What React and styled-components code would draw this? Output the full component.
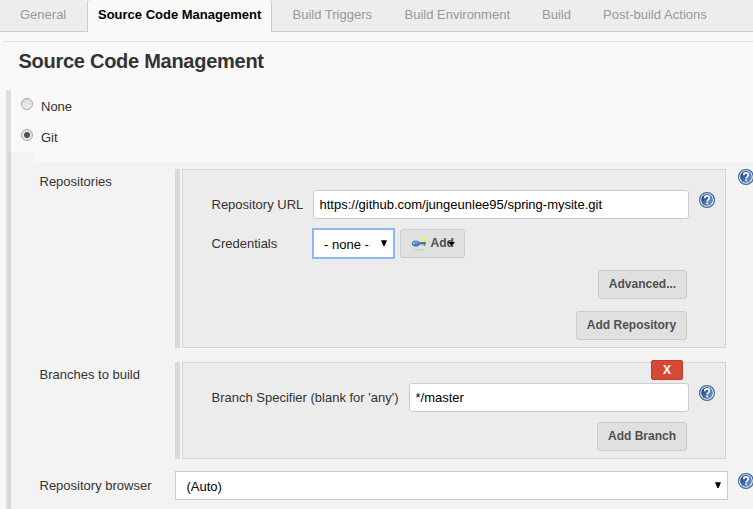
import React from "react";
import styled, { createGlobalStyle, css } from "styled-components";

const GlobalStyle = createGlobalStyle`
  *, *::before, *::after { box-sizing: border-box; }
  body { margin: 0; background: #f9f9f9; overflow: hidden; }
  button, input { font-family: inherit; }
`;

const Page = styled.main`
  width: 753px;
  height: 509px;
  overflow: hidden;
  display: flex;
  flex-direction: column;
  background: #f9f9f9;
  color: #333;
  font: 13px/16px "Liberation Sans", Arial, sans-serif;
`;

const TabBar = styled.nav`
  display: flex;
  flex: none;
  height: 32px;
  background: #ededed;
  border-bottom: 1px solid #ccc;
`;

const Tab = styled.a`
  flex: none;
  width: ${(p) => p.$width}px;
  height: 32px;
  padding: 7px 0 0 ${(p) => p.$indent}px;
  white-space: nowrap;
  color: #999;
  letter-spacing: ${(p) => p.$spacing || 0}px;
  ${(p) =>
    p.$active &&
    css`
      color: #000;
      font-weight: bold;
      background: #f9f9f9;
      border: 1px solid #ccc;
      border-width: 0 1px;
      border-radius: 3px 3px 0 0;
    `}
`;

const Title = styled.h1`
  flex: none;
  height: 49px;
  margin: 9px 0 0 3px;
  padding: 7px 0 0 15.5px;
  border-top: 1px solid #ddd;
  font-size: 20px;
  line-height: 24px;
  letter-spacing: -0.27px;
`;

const Section = styled.section`
  flex: 1;
  margin-left: 6px;
  border-left: 5px solid #dedede;
`;

const RadioRow = styled.label`
  display: flex;
  align-items: flex-start;
  gap: 8px;
  height: 31px;
  padding: 8px 0 0 10px;
`;

const RadioDot = styled.span`
  flex: none;
  width: 12px;
  height: 12px;
  border: 1px solid #a5a5a5;
  border-radius: 50%;
  background: ${(p) =>
    p.$checked
      ? "radial-gradient(circle, #555 0 2.6px, #e6e6e6 3.4px)"
      : "linear-gradient(#dcdcdc, #eee)"};
`;

const RadioText = styled.span`
  padding-top: 1px;
`;

const PanelLip = styled.div`
  width: 26px;
  height: 10px;
  margin-left: -3px;
  background: #f3f3f3;
  border-left: 3px solid #d9d9d9;
`;

const Panel = styled.div`
  height: 347px;
  margin-left: -3px;
  padding: 7px 0 0 29px;
  border-left: 3px solid #d9d9d9;
  background: #f3f3f3;
  display: flex;
  flex-direction: column;
`;

const Row = styled.div`
  flex: none;
  display: flex;
  align-items: flex-start;
  height: ${(p) => p.$height}px;
  margin-bottom: ${(p) => p.$gap || 0}px;
`;

const RowLabel = styled.div`
  flex: none;
  width: 135px;
  padding-top: ${(p) => p.$top}px;
  text-indent: -0.5px;
`;

const Chunk = styled.div`
  flex: none;
  width: 551px;
  height: 100%;
  margin-right: 2px;
  padding-left: 2px;
  border-left: 5px solid #d9d9d9;
`;

const Card = styled.div`
  position: relative;
  height: 100%;
  border: 1px solid #d4d4d4;
  background: #ececec;
  padding: 20px 10px 0 28px;
`;

const Field = styled.div`
  display: flex;
  align-items: flex-start;
  height: ${(p) => p.$height}px;
`;

const FieldLabel = styled.label`
  flex: none;
  width: ${(p) => p.$width}px;
  padding-top: 7px;
  text-indent: 0.5px;
  white-space: nowrap;
`;

const TextInput = styled.input`
  flex: none;
  width: ${(p) => p.$width}px;
  height: 29px;
  padding: 0 5.5px;
  border: 1px solid #ccc;
  border-radius: 3px;
  background: #fff;
  color: #000;
  font-size: 13px;
`;

const SelectBox = styled.div`
  flex: none;
  display: flex;
  justify-content: space-between;
  width: ${(p) => p.$width}px;
  height: ${(p) => (p.$focused ? 31 : 29)}px;
  margin: ${(p) => (p.$focused ? "-1px 5px 0 -1px" : 0)};
  padding: ${(p) => (p.$focused ? "7px 6px 0 10px" : "7px 6px 0 10.5px")};
  border: ${(p) => (p.$focused ? "2px solid #8fb5f5" : "1px solid #ccc")};
  background: #fff;
  color: #000;
`;

const Caret = styled.svg`
  flex: none;
  width: 6px;
  height: 6px;
  margin-top: ${(p) => p.$top}px;
`;

const Button = styled.button`
  flex: none;
  width: ${(p) => p.$width}px;
  height: 29px;
  padding: 0 0 2px;
  border: 1px solid #ccc;
  border-radius: 3px;
  background: #e0e0e0;
  color: #505050;
  font-size: 12px;
  font-weight: bold;
  white-space: nowrap;
`;

const AddButton = styled(Button)`
  display: flex;
  align-items: center;
  padding: 0 0 2px 10px;
`;

const KeyIcon = styled.svg`
  flex: none;
  width: 17px;
  height: 16px;
  margin: 2px 2.5px 0 0;
`;

const MenuArrow = styled.svg`
  flex: none;
  width: 7px;
  height: 4px;
  margin: 2px 0 0 -5.5px;
`;

const ButtonRow = styled.div`
  display: flex;
  justify-content: flex-end;
  height: ${(p) => p.$height}px;
  padding-right: 28px;
`;

const DeleteButton = styled.button`
  position: absolute;
  top: -3px;
  right: 42px;
  width: 32px;
  height: 20px;
  padding: 0;
  border: 1px solid #c23b2e;
  border-radius: 2px;
  background: #d64937;
  color: #fff;
  font-size: 12px;
  line-height: 17px;
  font-weight: bold;
`;

const HelpSvg = styled.svg`
  flex: none;
  width: 16px;
  height: 16px;
  margin: ${(p) => p.$top}px 0 0 10px;
`;

const Help = ({ top = 0 }) => (
  <HelpSvg $top={top} viewBox="0 0 16 16" aria-label="Help">
    <defs>
      <linearGradient id="helpFill" x1="0" y1="0" x2="1" y2="1">
        <stop offset="0.2" stopColor="#214a87" />
        <stop offset="1" stopColor="#86a8d6" />
      </linearGradient>
    </defs>
    <circle cx="8" cy="8" r="7.4" fill="#fff" stroke="#3d66a2" strokeWidth="1.2" />
    <circle cx="8" cy="8" r="5.9" fill="url(#helpFill)" />
    <path
      d="M5.7 6.2C5.700 4.600 6.700 3.900 8 3.900s2.400.700 2.400 2.100C10.400 7.600 8.200 7.700 8.200 9.600"
      fill="none"
      stroke="#fff"
      strokeWidth="1.7"
    />
    <rect x="7.3" y="10.5" width="1.8" height="1.7" fill="#fff" />
  </HelpSvg>
);

const DownCaret = ({ top }) => (
  <Caret $top={top} viewBox="0 0 6 6">
    <path d="M0 0.200h6L3.600 6H2.400z" fill="#000" />
  </Caret>
);

const Key = () => (
  <KeyIcon viewBox="0 0 17 16">
    <ellipse cx="8" cy="14" rx="5.5" ry="0.8" fill="#ccc" />
    <circle cx="12.5" cy="3.5" r="2.500" fill="#f4ed4b" />
    <circle cx="12.5" cy="3.5" r="1" fill="#fffb9d" />
    <path d="M7 6h8v2.200h-.8v1.600h-1.400V8.600H7z" fill="#4779b5" />
    <ellipse cx="4.800" cy="7.500" rx="3.900" ry="3.100" fill="#4577b4" />
    <ellipse cx="4.800" cy="6.600" rx="2.900" ry="1.500" fill="#6c9bd2" />
    <circle cx="2.800" cy="7.500" r="0.700" fill="#dce6f2" />
  </KeyIcon>
);

export default function App() {
  return (
    <>
      <GlobalStyle />
      <Page>
        <TabBar>
          <Tab $width={87} $indent={20}>General</Tab>
          <Tab $width={185} $indent={10} $active>Source Code Management</Tab>
          <Tab $width={112} $indent={20.5}>Build Triggers</Tab>
          <Tab $width={138} $indent={20.5}>Build Environment</Tab>
          <Tab $width={60} $indent={20}>Build</Tab>
          <Tab $width={140} $indent={21} $spacing={0.03}>Post-build Actions</Tab>
        </TabBar>
        <Title>Source Code Management</Title>
        <Section>
          <RadioRow>
            <RadioDot />
            <RadioText>None</RadioText>
          </RadioRow>
          <RadioRow>
            <RadioDot $checked />
            <RadioText>Git</RadioText>
          </RadioRow>
          <PanelLip />
          <Panel>
            <Row $height={179} $gap={14}>
              <RowLabel $top={5}>Repositories</RowLabel>
              <Chunk>
                <Card>
                  <Field $height={39}>
                    <FieldLabel $width={102}>Repository URL</FieldLabel>
                    <TextInput $width={376} readOnly value="https://github.com/jungeunlee95/spring-mysite.git" />
                    <Help top={2} />
                  </Field>
                  <Field $height={41}>
                    <FieldLabel $width={102}>Credentials</FieldLabel>
                    <SelectBox $width={83} $focused>
                      - none -
                      <DownCaret top={3} />
                    </SelectBox>
                    <AddButton $width={65}>
                      <Key />
                      Add
                      <MenuArrow viewBox="0 0 7 4">
                        <path d="M0 0h7L3.500 4z" fill="#000" />
                      </MenuArrow>
                    </AddButton>
                  </Field>
                  <ButtonRow $height={41}>
                    <Button $width={89}>Advanced...</Button>
                  </ButtonRow>
                  <ButtonRow $height={29}>
                    <Button $width={111}>Add Repository</Button>
                  </ButtonRow>
                </Card>
              </Chunk>
              <Help />
            </Row>
            <Row $height={97} $gap={12}>
              <RowLabel $top={5}>Branches to build</RowLabel>
              <Chunk>
                <Card>
                  <DeleteButton>X</DeleteButton>
                  <Field $height={39}>
                    <FieldLabel $width={198}>Branch Specifier (blank for 'any')</FieldLabel>
                    <TextInput $width={280} readOnly value="*/master" />
                    <Help top={2} />
                  </Field>
                  <ButtonRow $height={29}>
                    <Button $width={90}>Add Branch</Button>
                  </ButtonRow>
                </Card>
              </Chunk>
            </Row>
            <Row $height={29}>
              <RowLabel $top={7}>Repository browser</RowLabel>
              <SelectBox $width={553}>
                (Auto)
                <DownCaret top={3} />
              </SelectBox>
              <Help top={2} />
            </Row>
          </Panel>
        </Section>
      </Page>
    </>
  );
}
